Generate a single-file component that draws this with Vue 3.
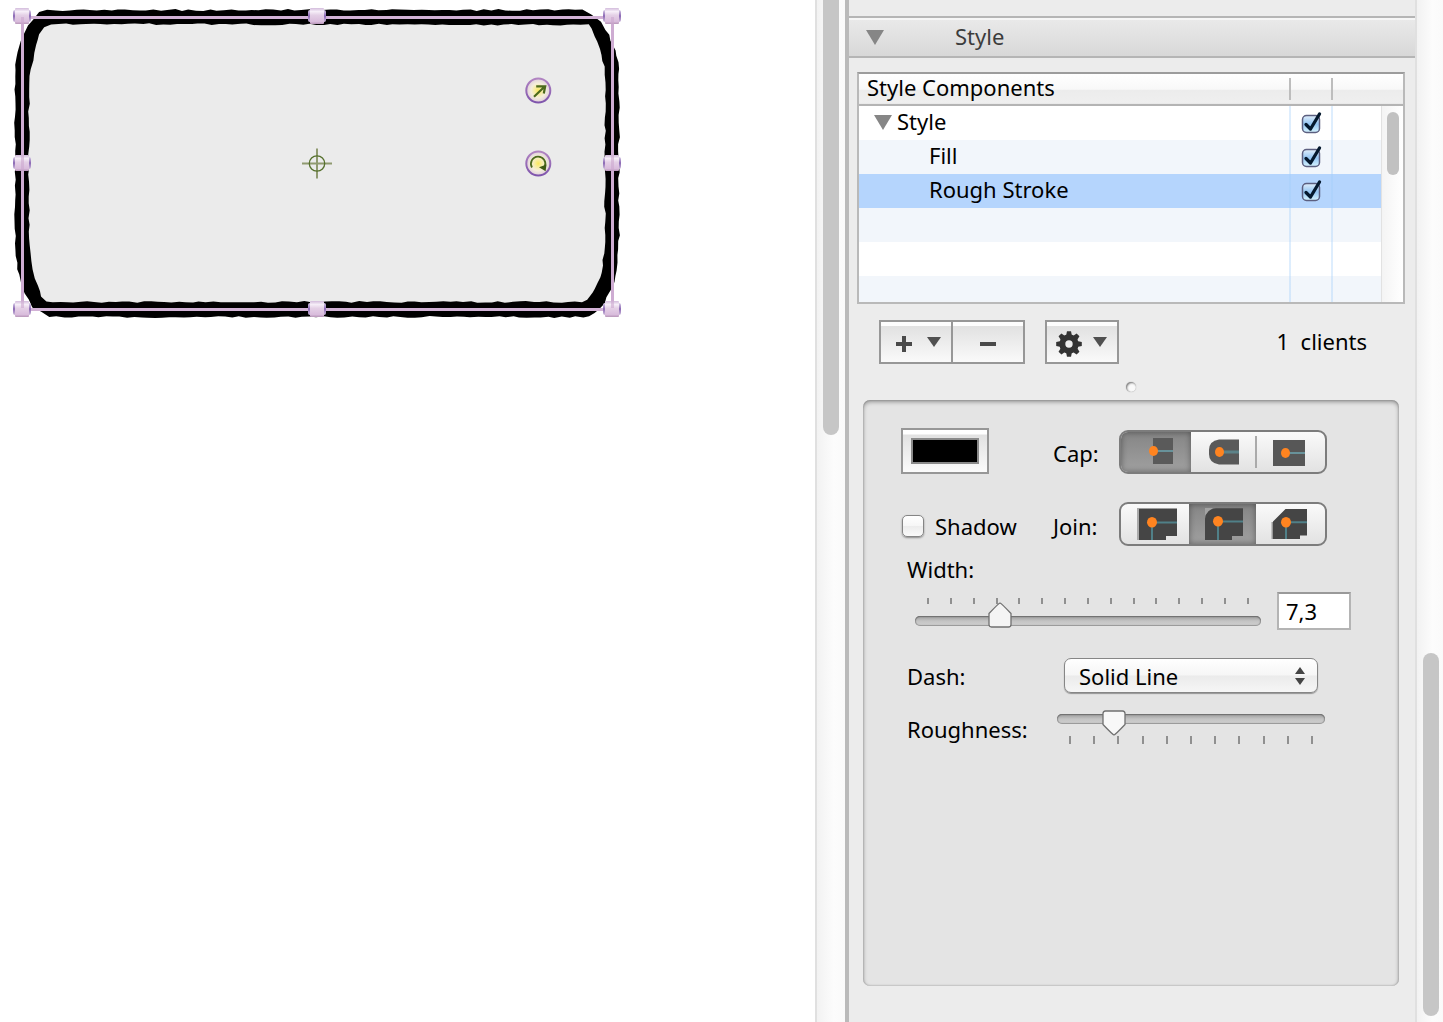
<script setup>
import { ref } from 'vue'

const rows = ref([
  { name: 'Style', level: 0, on: true },
  { name: 'Fill', level: 1, on: true },
  { name: 'Rough Stroke', level: 1, on: true, selected: true },
])

const clients = '1  clients'
const color = ref('#000000')
const shadow = ref(false)
const cap = ref('butt')
const join = ref('round')
const width = ref('7,3')
const widthPos = ref(45)
const roughPos = ref(18)
const dash = ref('Solid Line')

const caps = ['butt', 'round', 'square']
const joins = ['miter', 'round', 'bevel']

// Walks a closed outline and nudges points by a repeatable random amount.
function roughen(points, seed) {
  let s = seed
  const rnd = () => {
    s = (s * 16807) % 2147483647
    return s / 2147483647 - 0.5
  }
  let d = ''
  points.forEach(([x1, y1], i) => {
    const [x2, y2] = points[(i + 1) % points.length]
    const n = Math.max(1, Math.round(Math.hypot(x2 - x1, y2 - y1) / 7))
    for (let k = 0; k < n; k++) {
      const x = x1 + ((x2 - x1) * k) / n + rnd() * 1.8
      const y = y1 + ((y2 - y1) * k) / n + rnd() * 1.8
      d += `${d ? 'L' : 'M'}${x.toFixed(1)} ${y.toFixed(1)}`
    }
  })
  return d + 'Z'
}

const outer = roughen([
  [48, 10], [583, 10], [592, 14], [601, 21], [606, 30], [611, 40], [615, 50], [618, 62], [619, 80],
  [619, 235], [618, 255], [617, 270], [614, 282], [610, 293], [604, 303], [598, 310], [590, 317],
  [50, 317], [41, 312], [33, 307], [25, 293], [20, 281], [17, 263], [15, 250], [15, 130], [15, 90],
  [16, 64], [18, 52], [21, 42], [24, 33], [28, 25], [33, 19], [40, 12],
], 41)
const inner = roughen([
  [52, 24], [588, 25], [592, 29], [598, 42], [601, 55], [604, 66], [605, 90], [605, 235], [603, 260],
  [602, 272], [597, 283], [592, 293], [587, 299], [582, 302], [46, 302], [41, 296], [38, 285], [34, 278],
  [32, 262], [29, 246], [29, 90], [30, 70], [33, 60], [36, 45], [40, 35], [44, 28],
], 97)

const handles = [
  [22, 16], [317, 16], [612, 16], [22, 163], [612, 163], [22, 309], [317, 309], [612, 309],
]
</script>

<template>
  <div class="app">
    <main class="canvas">
      <svg class="drawing" width="640" height="330" viewBox="0 0 640 330" role="img" aria-label="Selected shape">
        <defs>
          <linearGradient id="hv" x1="0" y1="0" x2="0" y2="1">
            <stop offset="0" stop-color="#d3bcdc" />
            <stop offset="0.22" stop-color="#f6eef8" />
            <stop offset="0.45" stop-color="#e4d0e6" />
            <stop offset="0.85" stop-color="#d9bcdc" />
            <stop offset="1" stop-color="#b795b8" />
          </linearGradient>
          <linearGradient id="hs" x1="0" y1="0" x2="0" y2="1">
            <stop offset="0" stop-color="#d8cbe6" />
            <stop offset="0.5" stop-color="#8a68b4" />
            <stop offset="1" stop-color="#d0bcdc" />
          </linearGradient>
          <linearGradient id="ring" x1="0" y1="0" x2="0" y2="1">
            <stop offset="0" stop-color="#b184c2" />
            <stop offset="1" stop-color="#7f55ac" />
          </linearGradient>
          <radialGradient id="knob" cx="0.5" cy="0.5" r="0.5">
            <stop offset="0" stop-color="#fbe95e" />
            <stop offset="0.3" stop-color="#f8eda0" />
            <stop offset="0.6" stop-color="#f4eedc" />
            <stop offset="1" stop-color="#dfcedc" />
          </radialGradient>
        </defs>
        <path :d="outer" fill="#000" />
        <path :d="inner" fill="#ebebeb" />
        <path d="M22.500 17.500H612.500V309.500H22.500Z" fill="none" stroke="#d2b2d6" stroke-width="3" />
        <g v-for="([x, y], i) in handles" :key="i">
          <rect :x="x - 9" :y="y - 6" width="18" height="12" rx="2" fill="url(#hs)" />
          <rect :x="x - 7" :y="y - 8" width="14" height="16" rx="1" fill="url(#hv)" />
        </g>
        <path d="M22.500 17V308M612.500 17V308" stroke="#cda9d0" stroke-width="3" opacity="0.6" />
        <g fill="none">
          <path d="M302 163.500H332M317 148.500V178.500" stroke="#8f9a70" stroke-width="2" />
          <circle cx="317" cy="163.500" r="7.700" stroke="#55702c" stroke-width="1.300" />
        </g>
        <g v-for="y in [90.5, 163.5]" :key="y">
          <circle cx="538.300" :cy="y" r="12" fill="url(#knob)" stroke="url(#ring)" stroke-width="2" />
        </g>
        <g fill="none" stroke="#4c6a1c" stroke-width="2.200">
          <path d="M534 96.700L545 86.300M536.200 86.300H545.200L543.800 93.500" />
          <path d="M532 167.500A7.200 7.200 0 1 1 544.700 166.800" stroke-width="1.800" />
        </g>
        <path d="M539 167.300L546.500 164.500L545.600 171.200Z" fill="#3f5a14" />
      </svg>
    </main>

    <div class="scroll canvas-scroll"><div class="thumb"></div></div>

    <aside class="inspector">
      <header class="section">
        <svg class="tri" width="18" height="15" viewBox="0 0 18 15"><path d="M0 0H18L9 15Z" fill="#868686" /></svg>
        <h2>Style</h2>
      </header>

      <div class="outline">
        <table>
          <colgroup><col /><col class="c2" /><col class="c3" /><col class="c4" /></colgroup>
          <thead>
            <tr>
              <th>Style Components</th>
              <th class="sep"></th>
              <th class="sep"></th>
              <th></th>
            </tr>
          </thead>
          <tbody>
            <tr v-for="(r, i) in rows" :key="r.name" :class="{ selected: r.selected }">
              <td :class="['name', 'l' + r.level]">
                <svg v-if="r.level === 0" width="18" height="15" viewBox="0 0 18 15"><path d="M0 0H18L9 15Z" fill="#868686" /></svg>
                <span>{{ r.name }}</span>
              </td>
              <td class="line check"><input v-model="r.on" type="checkbox" class="tick" :aria-label="r.name" /></td>
              <td class="line"></td>
              <td v-if="i === 0" rowspan="6" class="bar"><div class="thumb"></div></td>
            </tr>
            <tr><td></td><td class="line"></td><td class="line"></td></tr>
            <tr><td></td><td class="line"></td><td class="line"></td></tr>
            <tr class="cut"><td></td><td class="line"></td><td class="line"></td></tr>
          </tbody>
        </table>
      </div>

      <div class="tools">
        <div class="group">
          <button type="button" aria-label="Add component">
            <svg width="70" height="40" viewBox="0 0 70 40">
              <path d="M15 22H31M23 14V30" stroke="#4a4a4a" stroke-width="4" />
              <path d="M46 15H60L53 25Z" fill="#505050" />
            </svg>
          </button>
          <button type="button" aria-label="Remove component">
            <svg width="70" height="40" viewBox="0 0 70 40"><path d="M27 22H43" stroke="#4a4a4a" stroke-width="4" /></svg>
          </button>
        </div>
        <div class="group">
          <button type="button" aria-label="Actions">
            <svg width="70" height="40" viewBox="0 0 70 40">
              <g transform="translate(22 22)">
                <circle r="6.700" fill="none" stroke="#333" stroke-width="6" />
                <path v-for="a in 8" :key="a" d="M-3 -8L-2 -12.800H2L3 -8Z" fill="#333" :transform="`rotate(${a * 45})`" />
              </g>
              <path d="M46 15H60L53 25Z" fill="#505050" />
            </svg>
          </button>
        </div>
        <span class="clients">{{ clients }}</span>
      </div>

      <div class="grip"><i></i></div>

      <section class="panel">
        <div class="row cap-row">
          <div class="left"><input v-model="color" type="color" class="well" aria-label="Stroke colour" /></div>
          <span id="cap" class="mid">Cap:</span>
          <div class="seg cap" role="radiogroup" aria-labelledby="cap">
            <label v-for="c in caps" :key="c" :class="[c, { on: cap === c }]">
              <input v-model="cap" type="radio" name="cap" :value="c" :aria-label="c" />
              <svg v-if="c === 'butt'" width="70" height="40" viewBox="0 0 70 40">
                <rect x="32" y="6" width="20" height="26" fill="#5a5a5a" />
                <path d="M32 19H52" stroke="#68929a" stroke-width="2" />
                <ellipse cx="32.500" cy="19" rx="4.500" ry="5" fill="#ff8420" />
              </svg>
              <svg v-else-if="c === 'round'" width="65" height="40" viewBox="0 0 65 40">
                <path d="M48 7.500V32.500H28Q18 31 18 22V18Q18 9 28 7.500Z" fill="#595959" />
                <path d="M28 20H48" stroke="#5d8389" stroke-width="3" />
                <ellipse cx="28.500" cy="20" rx="4.500" ry="5" fill="#ff8420" />
              </svg>
              <svg v-else width="69" height="40" viewBox="0 0 69 40">
                <path d="M0 4V36" stroke="#aaa" stroke-width="2" />
                <rect x="17" y="8" width="32" height="26" fill="#575757" />
                <path d="M29 21H49" stroke="#68929a" stroke-width="2" />
                <ellipse cx="29.500" cy="21" rx="4.500" ry="5" fill="#ff8420" />
              </svg>
            </label>
          </div>
        </div>

        <div class="row join-row">
          <label class="left shadow"><input v-model="shadow" type="checkbox" class="box" /><span>Shadow</span></label>
          <span id="join" class="mid">Join:</span>
          <div class="seg join" role="radiogroup" aria-labelledby="join">
            <label v-for="j in joins" :key="j" :class="[j, { on: join === j }]">
              <input v-model="join" type="radio" name="join" :value="j" :aria-label="j" />
              <svg v-if="j === 'miter'" width="68" height="40" viewBox="0 0 68 40">
                <path d="M17 4V36" stroke="#aaa" stroke-width="2" />
                <path d="M18 4.500H56V32H45V36H18Z" fill="#454545" />
                <path d="M31 18.500H56M31 18V36" stroke="#508088" stroke-width="2" />
                <ellipse cx="31" cy="18.300" rx="5" ry="5.300" fill="#ff8420" />
              </svg>
              <svg v-else-if="j === 'round'" width="67" height="40" viewBox="0 0 67 40">
                <path d="M16 12V4H24" fill="#a3a3a3" />
                <path d="M16 15Q17 5 27 4.300H54V32H43V36H16Z" fill="#454545" />
                <path d="M29 17.500H54M29 17V36" stroke="#508088" stroke-width="2" />
                <ellipse cx="29" cy="17.300" rx="5" ry="5.300" fill="#ff8420" />
              </svg>
              <svg v-else width="69" height="40" viewBox="0 0 69 40">
                <path d="M16.500 18V35" stroke="#999" stroke-width="2" />
                <path d="M17 17.500L29.500 5H51V31.500H44V35H17Z" fill="#454545" />
                <path d="M30 18.300H51M30 18V35" stroke="#508088" stroke-width="2" />
                <ellipse cx="30" cy="18.300" rx="5" ry="5.300" fill="#ff8420" />
              </svg>
            </label>
          </div>
        </div>

        <label class="caption" for="width">Width:</label>
        <div class="row width-row">
          <div class="slider up">
            <div class="ticks"><i v-for="n in 15" :key="n"></i></div>
            <input id="width" v-model="widthPos" type="range" min="0" max="200" />
          </div>
          <input v-model="width" type="text" class="field" aria-label="Width value" />
        </div>

        <div class="row dash-row">
          <label for="dash" class="name-col">Dash:</label>
          <div class="popup">
            <select id="dash" v-model="dash"><option>Solid Line</option></select>
            <svg width="10" height="18" viewBox="0 0 10 18"><path d="M0 7L5 0L10 7ZM0 11L5 18L10 11Z" fill="#444" /></svg>
          </div>
        </div>

        <div class="row rough-row">
          <label for="rough" class="name-col">Roughness:</label>
          <div class="slider down">
            <input id="rough" v-model="roughPos" type="range" min="0" max="100" />
            <div class="ticks"><i v-for="n in 11" :key="n"></i></div>
          </div>
        </div>
      </section>
    </aside>

    <div class="scroll page-scroll"><div class="thumb"></div></div>
  </div>
</template>

<style>
body {
  margin: 0;
  background: #fff;
}
</style>

<style scoped>
.app, .app * {
  box-sizing: border-box;
}
.app {
  display: flex;
  min-height: 100vh;
  font: 22px/34px "Noto Sans", "Open Sans", sans-serif;
  color: #000;
}
.app svg {
  display: block;
}
input, select, button {
  appearance: none;
  margin: 0;
  padding: 0;
  border: 0;
  background: none;
  font: inherit;
  color: inherit;
}
.canvas {
  flex: 1;
  min-width: 0;
  overflow: hidden;
}
.scroll {
  display: flex;
  flex-direction: column;
  align-items: center;
  border-left: 2px solid #e0e0e0;
  background: linear-gradient(to right, #f2f2f2, #fcfcfc 60%, #fafafa);
}
.thumb {
  width: 16px;
  border-radius: 8px;
  background: #c6c6c6;
}
.canvas-scroll {
  width: 34px;
  border-right: 4px solid #bababa;
}
.canvas-scroll .thumb {
  height: 435px;
  border-radius: 0 0 8px 8px;
}
.page-scroll {
  width: 28px;
  justify-content: flex-end;
  padding: 0 0 6px 2px;
}
.page-scroll .thumb {
  height: 363px;
}
.inspector {
  width: 566px;
  padding: 16px 0 36px;
  background: #ececec;
  display: flex;
  flex-direction: column;
}
.section {
  display: flex;
  align-items: center;
  height: 42px;
  padding-left: 17px;
  border: solid #b5b5b5;
  border-width: 2px 0;
  background: linear-gradient(#f6f6f6 2px, #e9e9e9 2px, #d8d8d8);
}
.section h2 {
  margin: 0 0 0 71px;
  padding-bottom: 2px;
  font: inherit;
  color: #3c3c3c;
}
.outline {
  margin: 14px 10px 0 8px;
  border: 2px solid #b9b9b9;
  border-top-color: #9c9c9c;
  background: #fff;
}
table {
  width: 100%;
  table-layout: fixed;
  border-collapse: collapse;
}
.c2 { width: 42px; }
.c3 { width: 50px; }
.c4 { width: 22px; }
th, td {
  padding: 0;
  height: 34px;
}
thead tr {
  background: linear-gradient(#fff, #f8f8f8 48%, #ececec 50%, #efefef 92%, #b4b4b4 94%);
}
th {
  height: 32px;
  padding-left: 8px;
  line-height: 26px;
  vertical-align: top;
  text-align: left;
  font-weight: 400;
}
th.sep {
  background: linear-gradient(#bdbdbd, #bdbdbd) 0 4px / 2px 22px no-repeat;
}
tbody tr:nth-child(even) { background: #f2f6fb; }
tbody tr.selected { background: #b5d5fd; }
tbody .cut td { height: 26px; }
.line {
  background: linear-gradient(to right, rgb(160 205 250 / 35%) 2px, transparent 2px);
}
.check { padding-left: 2px; }
.name span {
  display: block;
  height: 34px;
  line-height: 30px;
}
.name.l0 {
  display: flex;
  align-items: center;
  gap: 5px;
  padding-left: 15px;
}
.name.l0 svg { margin-bottom: 2px; }
.name.l1 { padding-left: 70px; }
.bar {
  padding: 6px 0 0 6px;
  vertical-align: top;
  background: linear-gradient(to right, #e2e2e2 1px, #f4f4f4 1px, #fff);
}
.bar .thumb {
  width: 12px;
  height: 63px;
  border-radius: 6px;
  background: #c1c1c1;
}
.tick {
  display: block;
  width: 24px;
  height: 24px;
  margin: 0 auto;
  background: url("data:image/svg+xml,%3Csvg xmlns='http://www.w3.org/2000/svg' width='24' height='24'%3E%3Cdefs%3E%3ClinearGradient id='g' x1='0' y1='0' x2='0' y2='1'%3E%3Cstop offset='0' stop-color='%23e2effb'/%3E%3Cstop offset='.5' stop-color='%2394c5f3'/%3E%3Cstop offset='1' stop-color='%23d6f4fe'/%3E%3C/linearGradient%3E%3C/defs%3E%3Crect x='3.500' y='4.500' width='17' height='17' rx='4' fill='url(%23g)' stroke='%235c5f80' stroke-width='1.500'/%3E%3C/svg%3E");
}
.tick:checked {
  background: url("data:image/svg+xml,%3Csvg xmlns='http://www.w3.org/2000/svg' width='24' height='24'%3E%3Cdefs%3E%3ClinearGradient id='g' x1='0' y1='0' x2='0' y2='1'%3E%3Cstop offset='0' stop-color='%23e2effb'/%3E%3Cstop offset='.5' stop-color='%2394c5f3'/%3E%3Cstop offset='1' stop-color='%23d6f4fe'/%3E%3C/linearGradient%3E%3C/defs%3E%3Crect x='3.500' y='4.500' width='17' height='17' rx='4' fill='url(%23g)' stroke='%235c5f80' stroke-width='1.500'/%3E%3Cpath d='M7 13.500L11.500 18L20.500 3' fill='none' stroke='%2305192e' stroke-width='3.300' stroke-linecap='round' stroke-linejoin='round'/%3E%3C/svg%3E");
}
.tools {
  display: flex;
  gap: 20px;
  margin-top: 16px;
  padding: 0 48px 0 30px;
}
.group {
  display: flex;
  gap: 2px;
  padding: 2px;
  background: #979797;
}
.group button {
  width: 70px;
  height: 40px;
  background: linear-gradient(#fdfdfd 4px, #e1e1e1 4px, #fafafa);
}
.clients {
  margin-left: auto;
  white-space: pre;
  line-height: 42px;
}
.grip {
  display: flex;
  justify-content: center;
  margin-top: 18px;
  padding-right: 2px;
}
.grip i {
  width: 10px;
  height: 10px;
  border-radius: 50%;
  background: #fafafa;
  box-shadow: inset 1px 1px 2px #777, 0 0 1px #999;
}
.panel {
  flex: 1;
  margin: 8px 16px 0 14px;
  padding: 28px 0 0 38px;
  border-radius: 7px;
  background: #e4e4e4;
  box-shadow: inset 0 2px 4px rgb(0 0 0 / 35%), inset 0 0 2px rgb(0 0 0 / 30%);
}
.row {
  display: flex;
  align-items: center;
}
.left {
  display: flex;
  align-items: center;
  gap: 11px;
  width: 152px;
}
.shadow { padding-top: 4px; }
.mid {
  width: 66px;
  padding-top: 4px;
}
.cap-row .seg { align-self: flex-end; }
.well {
  width: 88px;
  height: 46px;
  padding: 8px;
  border: 2px solid #979797;
  background: linear-gradient(#fff 4px, #e1e1e1 5px, #fbfbfb);
}
.well::-webkit-color-swatch-wrapper { padding: 0; }
.well::-webkit-color-swatch {
  border: 2px solid #8a8a8a;
  border-radius: 0;
}
.join-row { margin-top: 28px; }
.box {
  width: 22px;
  height: 22px;
  margin-left: 1px;
  border: 1px solid #858585;
  border-radius: 5px;
  background: linear-gradient(#fff, #f6f6f6 50%, #ececec 52%, #fafafa);
  box-shadow: 0 1px 2px rgb(0 0 0 / 40%);
}
.seg {
  display: flex;
  height: 44px;
  overflow: hidden;
  border: 2px solid #7c7c7c;
  border-radius: 9px;
  background: linear-gradient(#fafafa, #e2e2e2);
}
.seg label { position: relative; }
.seg input {
  position: absolute;
  inset: 0;
}
.seg svg {
  position: relative;
  overflow: visible;
}
.seg .on {
  background: linear-gradient(#858585, #a0a0a0);
  box-shadow: inset 0 0 6px rgb(0 0 0 / 40%);
}
.caption {
  display: block;
  margin: 6px 0 0 6px;
}
.width-row {
  margin-top: 6px;
  gap: 16px;
  padding-left: 14px;
}
.ticks {
  display: flex;
  justify-content: space-between;
  padding: 0 12px;
}
.ticks i {
  width: 2px;
  background: #909090;
}
.up {
  width: 346px;
  padding-top: 5px;
}
.down { width: 268px; }
.up .ticks i { height: 6px; }
.down .ticks i { height: 8px; }
.slider input {
  position: relative;
  display: block;
  width: 100%;
  height: 26px;
}
.slider input::-webkit-slider-runnable-track {
  height: 10px;
  border-radius: 5px;
  background: linear-gradient(#9a9a9a, #c4c4c4 50%, #cfcfcf);
  box-shadow: inset 0 1px 1px #6e6e6e, inset 0 0 1px 1px #969696;
}
.slider input::-webkit-slider-thumb {
  appearance: none;
  width: 26px;
  height: 28px;
}
.up input::-webkit-slider-thumb {
  margin-top: -15px;
  background: url("data:image/svg+xml,%3Csvg xmlns='http://www.w3.org/2000/svg' width='26' height='28'%3E%3Cpath d='M13 2Q14.500 2.500 24 12.500V23.500Q24 26 21.500 26H4.500Q2 26 2 23.500V12.500Q11.500 2.500 13 2Z' fill='%23f4f4f4' stroke='%23707070' stroke-width='1.300'/%3E%3C/svg%3E");
}
.up input::-webkit-slider-runnable-track { margin-top: 8px; }
.down input::-webkit-slider-runnable-track { margin-bottom: 8px; }
.down input::-webkit-slider-thumb {
  margin-top: -5px;
  background: url("data:image/svg+xml,%3Csvg xmlns='http://www.w3.org/2000/svg' width='26' height='28'%3E%3Cpath d='M13 26Q14.500 25.500 24 15.500V4.500Q24 2 21.500 2H4.500Q2 2 2 4.500V15.500Q11.500 25.500 13 26Z' fill='%23f8f8f8' stroke='%23707070' stroke-width='1.300'/%3E%3C/svg%3E");
}
.field {
  width: 74px;
  height: 38px;
  padding-left: 7px;
  border: 2px solid #b4b4b4;
  border-top-color: #999;
  background: #fff;
}
.dash-row {
  margin-top: 28px;
  padding-left: 6px;
}
.name-col { width: 150px; }
.popup {
  position: relative;
  margin-left: 7px;
}
.dash-row .popup { margin-left: 7px; }
.popup select {
  display: block;
  width: 254px;
  height: 35px;
  padding-left: 14px;
  border: 1px solid #868686;
  border-radius: 7px;
  background: linear-gradient(#fff, #f6f6f6 48%, #ebebeb 52%, #f6f6f6);
  box-shadow: 0 1px 1px rgb(0 0 0 / 35%);
}
.popup svg {
  position: absolute;
  right: 13px;
  top: 9px;
  pointer-events: none;
}
.rough-row {
  margin-top: 15px;
  padding-left: 6px;
}
.rough-row .name-col { padding-top: 4px; }
</style>
